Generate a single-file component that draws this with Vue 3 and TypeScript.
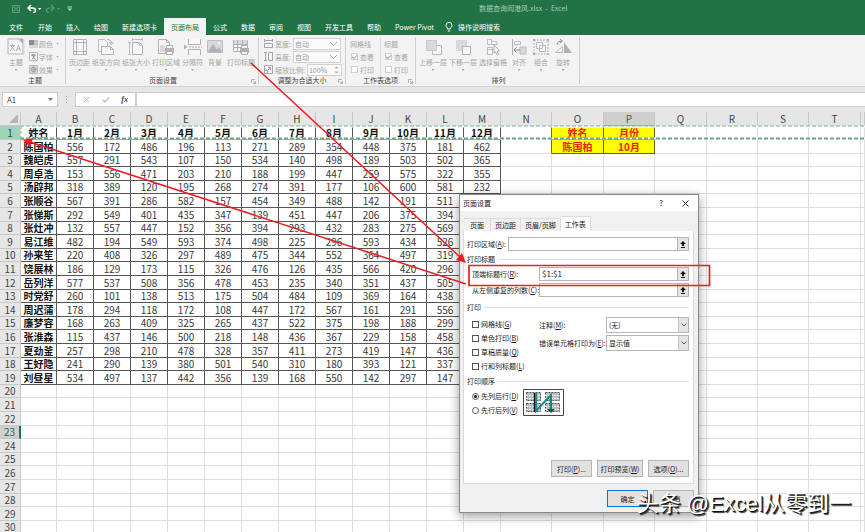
<script setup lang="ts">
import { ref } from 'vue'

interface Shape {
  d: string
  fill?: string
  stroke?: string
  dash?: string
}
interface Tool {
  label: string
  menu: boolean
  shapes: Shape[]
}

const dark = '#b4afb4'
const soft = '#dcd6dd'
const paper = '#f8f6f8'
const printer: Shape[] = [
  { d: 'M8 10h9v5H8z', fill: dark },
  { d: 'M9.500 7.500h6v3h-6z', fill: paper, stroke: dark },
  { d: 'M9.500 13.500h6v3h-6z', fill: paper, stroke: dark },
]

const menus = ['文件', '开始', '插入', '绘图', '新建选项卡', '页面布局', '公式', '数据', '审阅', '视图', '开发工具', '帮助', 'Power Pivot']

const themeTool: Tool = {
  label: '主题',
  menu: true,
  shapes: [
    { d: 'M1 1h15v15H1z', fill: paper, stroke: dark },
    { d: 'M1 16.500h16V1', stroke: soft },
    { d: 'M11 1h5v5z', fill: dark },
    { d: 'M3 7.500h5M5.500 6v1.500M7 8l-4 5M4 8l4 5M9.500 13l2-6 2 6M10 11h3', stroke: dark },
  ],
}

const pageTools: Tool[] = [
  {
    label: '页边距',
    menu: true,
    shapes: [
      { d: 'M2.500 1.500h13v15h-13z', fill: paper, stroke: dark },
      { d: 'M5.500 1v16M12.500 1v16M2 4.500h14M2 13.500h14', stroke: dark },
    ],
  },
  {
    label: '纸张方向',
    menu: true,
    shapes: [
      { d: 'M1.500 1.500h6l3 3v9h-9z', fill: paper, stroke: '#c0bbc0' },
      { d: 'M4.500 8.500h9l3 3v5h-12z', fill: paper, stroke: dark },
      { d: 'M13.500 8.500v3h3', stroke: dark },
      { d: 'M10 1.500c3 0 4.500 1 4.500 4M12.500 4l2 2.500 2-2.500', stroke: dark },
    ],
  },
  {
    label: '纸张大小',
    menu: true,
    shapes: [
      { d: 'M5.500 4.500h7l3 3v9h-10z', fill: paper, stroke: dark },
      { d: 'M12.500 4.500v3h3M5 1.500h11M5.500 0v3M15.500 0v3M2.500 4v13M1 4.500h3M1 16.500h3', stroke: '#c0bbc0' },
    ],
  },
  {
    label: '打印区域',
    menu: true,
    shapes: [
      { d: 'M1.500 1.500h8l3 3v11h-11z', fill: paper, stroke: dark },
      { d: 'M9.500 1.500v3h3', stroke: dark },
      { d: 'M3 7h5v7H3z', fill: soft },
      ...printer,
    ],
  },
  {
    label: '分隔符',
    menu: true,
    shapes: [
      { d: 'M4.500 1v5.500h12V1M4.500 17v-5.500h12V17', fill: paper, stroke: dark },
      { d: 'M5 9h13', stroke: dark, dash: '2 1' },
      { d: 'M0 6.500l3.500 2.500L0 11.500z', fill: dark },
    ],
  },
  {
    label: '背景',
    menu: false,
    shapes: [
      { d: 'M1.500 2.500h15v12h-15z', fill: soft, stroke: '#c0bbc0' },
      { d: 'M2 14l5-8 4 6 2-3 3 5z', fill: dark },
      { d: 'M12 4h2v2h-2z', fill: paper },
    ],
  },
  {
    label: '打印标题',
    menu: false,
    shapes: [
      { d: 'M1.500 2.500h14v11h-14z', fill: paper, stroke: dark },
      { d: 'M2 2h13v4H2z', fill: soft },
      { d: 'M1 6.500h14M1 9.500h14M5.500 2v11M10.500 2v11', stroke: dark },
      ...printer,
    ],
  },
]

const arrangeTools: Tool[] = [
  {
    label: '上移一层',
    menu: true,
    shapes: [
      { d: 'M8.500 7.500h9v9h-9z', fill: paper, stroke: '#c0bbc0' },
      { d: 'M2 2h11v11H2z', fill: soft },
      { d: 'M2.500 2.500h10v10h-10z', stroke: '#cfc8d0' },
    ],
  },
  {
    label: '下移一层',
    menu: true,
    shapes: [
      { d: 'M2 2h11v11H2z', fill: soft },
      { d: 'M8.500 8.500h8v8h-8z', fill: paper, stroke: dark },
    ],
  },
  {
    label: '选择窗格',
    menu: false,
    shapes: [
      { d: 'M3.500 1.500h4v5h-4zM3.500 9.500h5v7h-5zM3 11.500h5M8 6.500h5v-3H8', fill: paper, stroke: '#c0bbc0' },
      { d: 'M10 7l6 6-3 .3 1.500 3-1.500.6-1.300-3L10 15z', fill: paper, stroke: dark },
    ],
  },
  {
    label: '对齐',
    menu: true,
    shapes: [
      { d: 'M2.500 1v16', stroke: dark },
      { d: 'M4.500 3.500h6v3h-6z', fill: paper, stroke: '#c0bbc0' },
      { d: 'M10 9h6v7h-6z', fill: soft, stroke: '#c0bbc0' },
      { d: 'M4 12h6M6.500 9.500L4 12l2.500 2.500', stroke: '#8d888d' },
    ],
  },
  {
    label: '组合',
    menu: true,
    shapes: [
      { d: 'M2 2h14v14H2z', stroke: dark, dash: '2 1' },
      { d: 'M4.500 4.500h6v6h-6zM7.500 7.500h6v6h-6z', fill: paper, stroke: '#bdb8bd' },
      { d: 'M1 1h2v2H1zM15 1h2v2h-2zM1 15h2v2H1zM15 15h2v2h-2z', fill: dark },
    ],
  },
  {
    label: '旋转',
    menu: true,
    shapes: [
      { d: 'M1.500 14.500h7v-6z', fill: paper, stroke: '#bdb8bd' },
      { d: 'M10 4v11h8z', fill: dark },
      { d: 'M3 7c0-3 2-4 5-4M6 1l2.500 2L6 5', stroke: '#8d888d' },
    ],
  },
]

const themeRows: { label: string; shapes: Shape[] }[] = [
  {
    label: '颜色',
    shapes: [
      { d: 'M0 1h5v5H0z', fill: '#8f8a8f' },
      { d: 'M5 1h4v5H5z', fill: '#c8c2c8' },
      { d: 'M0 6h9v3H0z', fill: '#dad4da' },
    ],
  },
  {
    label: '字体',
    shapes: [
      { d: 'M.5.5h8v8h-8z', fill: paper, stroke: '#bdb8bd' },
      { d: 'M2 3h5M4.500 2v1M6 3L3 7.500M3 3l3.500 4.500', stroke: '#8f8a8f' },
    ],
  },
  {
    label: '效果',
    shapes: [
      { d: 'M.5.5h8v8h-8z', fill: soft, stroke: '#bdb8bd' },
      { d: 'M4.500 2a2.500 2.500 0 1 0 .1 0z', fill: '#bbb5bb', stroke: '#a09ba0' },
    ],
  },
]

const cols = ['A', 'B', 'C', 'D', 'E', 'F', 'G', 'H', 'I', 'J', 'K', 'L', 'M', 'N', 'O', 'P', 'Q', 'R', 'S', 'T', '']
const source = `姓名 1月 2月 3月 4月 5月 6月 7月 8月 9月 10月 11月 12月
陈国柏 556 172 486 196 113 271 289 354 448 375 181 462
魏皑虎 557 291 543 107 150 534 140 498 189 503 502 365
周卓浩 153 556 471 203 210 188 199 447 259 575 322 355
汤辟邦 318 389 120 195 268 274 391 177 106 600 581 232
张顺谷 567 391 286 582 157 454 349 488 142 191 511
张悌斯 292 549 401 435 347 139 451 447 206 375 394
张灶冲 132 557 447 152 356 394 293 432 283 275 569
易江维 482 194 549 593 374 498 225 296 593 434 526
孙来笙 220 408 326 297 489 475 344 552 364 497 319
饶展林 186 129 173 115 326 476 126 435 566 420 296
岳列洋 577 537 508 356 478 453 235 340 351 437 505
时党舒 260 101 138 513 175 504 484 109 369 164 438
周迟蒲 178 294 118 172 108 447 172 567 161 291 556
廉梦容 168 263 409 325 265 437 522 375 198 188 299
张淮森 115 437 146 500 218 148 436 367 229 158 458
夏劲釜 257 298 210 478 328 357 411 273 419 147 436
王好隐 241 290 139 380 501 540 310 180 393 121 337
刘昼星 534 497 137 442 356 139 168 550 142 297 147`
const data = source.split('\n').map((line) => line.split(' '))
const lookup = [
  ['姓名', '月份'],
  ['陈国柏', '10月'],
]

function cell(r: number, c: number): string {
  if (c < 13) return data[r - 1]?.[c] ?? ''
  if (c === 14 || c === 15) return lookup[r - 1]?.[c - 14] ?? ''
  return ''
}
function cellClass(r: number, c: number) {
  return {
    filled: r <= 19 && c < 13,
    strong: r === 1 || c === 0,
    query: r <= 2 && (c === 14 || c === 15),
    edge: r <= 2 && c === 13,
  }
}

const colClass = (c: number) => (c === 0 ? 'c-name' : c < 13 ? 'c-num' : c === 20 ? 'c-rest' : c === 14 || c === 16 || c === 19 ? 'c-wide-b' : 'c-wide')

const width = ref('自动')
const height = ref('自动')
const titleRows = ref('$1:$1')
const comments = ref('(无)')
const errors = ref('显示值')
const order = ref('down')
const printOptions = [
  { label: '网格线', key: 'G' },
  { label: '单色打印', key: 'B' },
  { label: '草稿质量', key: 'Q' },
  { label: '行和列标题', key: 'L' },
]
</script>

<template>
  <div class="app">
    <header class="top">
      <div class="titlebar">
        <svg class="quick" width="76" height="18" viewBox="0 0 76 18" fill="none">
          <path d="M12.500 5.500h7v7h-7zM14 5.500v2.500h4V5.500M14 12.500V10h4v2.500" stroke="#5c9a78" />
          <path d="M31 5l-3 3 3 3M28.500 8h4c2 0 3 1 3 2.500 0 1-1 2-2.500 2" stroke="#fff" stroke-width="1.500" />
          <path d="M38 8h3.500L39.700 10z" fill="#fff" />
          <path d="M51 5l3 3-3 3M53.500 8h-4c-2 0-3 1-3 2.500 0 1 1 2 2.500 2" stroke="#5c9a78" stroke-width="1.200" />
          <path d="M57 8h3l-1.500 2z" fill="#5c9a78" />
          <path d="M67.500 7h4.500" stroke="#b9d5c6" />
          <path d="M67.500 8.500h4.500l-2.250 2.500z" fill="#b9d5c6" />
        </svg>
        <span class="doc">数据查询阎港风.xlsx&nbsp; -&nbsp; Excel</span>
      </div>
      <nav class="tabs">
        <button v-for="m in menus" :key="m" type="button" :class="['tab', { active: m === '页面布局' }]">{{ m }}</button>
        <svg class="bulb" width="8" height="10" viewBox="0 0 8 10" fill="none" stroke="#fff">
          <path d="M2.700 7C2.700 5.500 1 5 1 3.300a3 3 0 0 1 6 0C7 5 5.300 5.500 5.300 7zM2.800 9h2.400" />
        </svg>
        <button type="button" class="tell">操作说明搜索</button>
      </nav>
    </header>

    <section class="ribbon">
      <div class="group g-theme">
        <div class="tools">
          <button type="button" class="big" disabled>
            <svg width="18" height="18" viewBox="0 0 18 18">
              <path v-for="(s, i) in themeTool.shapes" :key="i" :d="s.d" :fill="s.fill ?? 'none'" :stroke="s.stroke ?? 'none'" />
            </svg>
            <span>{{ themeTool.label }}</span>
            <i class="caret"></i>
          </button>
          <div class="stack">
            <button v-for="t in themeRows" :key="t.label" type="button" class="small" disabled>
              <svg width="9" height="9" viewBox="0 0 9 9">
                <path v-for="(s, i) in t.shapes" :key="i" :d="s.d" :fill="s.fill ?? 'none'" :stroke="s.stroke ?? 'none'" />
              </svg>
              {{ t.label }}<i class="caret"></i>
            </button>
          </div>
        </div>
        <div class="caption">主题</div>
      </div>

      <div class="group g-page">
        <div class="tools">
          <button v-for="t in pageTools" :key="t.label" type="button" class="big" disabled>
            <svg width="18" height="18" viewBox="0 0 18 18">
              <path v-for="(s, i) in t.shapes" :key="i" :d="s.d" :fill="s.fill ?? 'none'" :stroke="s.stroke ?? 'none'" :stroke-dasharray="s.dash" />
            </svg>
            <span>{{ t.label }}</span>
            <i v-if="t.menu" class="caret"></i>
          </button>
        </div>
        <div class="caption">页面设置</div>
        <svg class="launch" width="5" height="5" viewBox="0 0 5 5" fill="none" stroke="#b0b0b0"><path d="M.5 4V.5H4M2 2l2.500 2.500M4.500 2v2.500H2" /></svg>
      </div>

      <div class="group g-fit">
        <div class="fit-rows">
          <div class="fit">
            <svg width="9" height="9" viewBox="0 0 9 9" fill="none" stroke="#a9a4a9"><path d="M.5 0v3M8.500 0v3M0 1.500h9M.5 4.500h8v4h-8z" /></svg>
            <label for="fitw">宽度:</label>
            <span class="pick">
              <select id="fitw" v-model="width" disabled><option>自动</option></select>
              <svg width="9" height="6" viewBox="0 0 9 6" fill="none" stroke="#aaa"><path d="M1 1l3.500 3.500L8 1" /></svg>
            </span>
          </div>
          <div class="fit">
            <svg width="9" height="9" viewBox="0 0 9 9" fill="none" stroke="#a9a4a9"><path d="M0 .5h3M0 8.500h3M1.500 0v9M4.500.5h4v8h-4z" /></svg>
            <label for="fith">高度:</label>
            <span class="pick">
              <select id="fith" v-model="height" disabled><option>自动</option></select>
              <svg width="9" height="6" viewBox="0 0 9 6" fill="none" stroke="#aaa"><path d="M1 1l3.500 3.500L8 1" /></svg>
            </span>
          </div>
          <div class="fit">
            <svg width="9" height="9" viewBox="0 0 9 9" fill="none" stroke="#a9a4a9"><path d="M.5.5h8v8h-8zM.5 5.500h3v3M4 2.500h2.500V5M6.500 2.500L4 5" /></svg>
            <label for="scale">缩放比例:</label>
            <span class="pick">
              <input id="scale" value="100%" disabled />
              <svg width="5" height="9" viewBox="0 0 5 9" fill="#aaa"><path d="M.5 3L2.500 1l2 2zM.5 6l2 2 2-2z" /></svg>
            </span>
          </div>
        </div>
        <div class="caption">调整为合适大小</div>
        <svg class="launch" width="5" height="5" viewBox="0 0 5 5" fill="none" stroke="#b0b0b0"><path d="M.5 4V.5H4M2 2l2.500 2.500M4.500 2v2.500H2" /></svg>
      </div>

      <div class="group g-opts">
        <div class="opts">
          <div v-for="g in ['网格线', '标题']" :key="g" class="opt">
            <span>{{ g }}</span>
            <label><input type="checkbox" checked disabled />查看</label>
            <label><input type="checkbox" disabled />打印</label>
          </div>
        </div>
        <div class="caption">工作表选项</div>
        <svg class="launch" width="5" height="5" viewBox="0 0 5 5" fill="none" stroke="#b0b0b0"><path d="M.5 4V.5H4M2 2l2.500 2.500M4.500 2v2.500H2" /></svg>
      </div>

      <div class="group g-arr">
        <div class="tools">
          <button v-for="t in arrangeTools" :key="t.label" type="button" class="big" disabled>
            <svg width="18" height="18" viewBox="0 0 18 18">
              <path v-for="(s, i) in t.shapes" :key="i" :d="s.d" :fill="s.fill ?? 'none'" :stroke="s.stroke ?? 'none'" :stroke-dasharray="s.dash" />
            </svg>
            <span>{{ t.label }}</span>
            <i v-if="t.menu" class="caret"></i>
          </button>
        </div>
        <div class="caption">排列</div>
      </div>
    </section>

    <section class="formula">
      <div class="namebox"><input value="A1" aria-label="名称框" /><i class="caret"></i></div>
      <svg class="grip" width="3" height="9" viewBox="0 0 3 9" fill="#aaa"><path d="M1 1h1v1H1zM1 4h1v1H1zM1 7h1v1H1z" /></svg>
      <div class="fx">
        <svg width="7" height="7" viewBox="0 0 7 7" fill="none" stroke="#b5b5b5"><path d="M1 1l5 5M6 1L1 6" /></svg>
        <svg width="8" height="7" viewBox="0 0 8 7" fill="none" stroke="#b5b5b5" stroke-width="1.200"><path d="M1 4l2 2 4-5" /></svg>
        <em>fx</em>
      </div>
      <input class="bar" aria-label="编辑栏" />
    </section>

    <main class="sheet">
      <table class="grid">
        <colgroup>
          <col class="c-head" />
          <col v-for="(c, i) in cols" :key="i" :class="colClass(i)" />
        </colgroup>
        <thead>
          <tr>
            <th class="corner"><svg width="9" height="9" viewBox="0 0 9 9"><path d="M9 0v9H0z" fill="#b4b4b4" /></svg></th>
            <th v-for="(c, i) in cols" :key="i" :class="{ current: c === 'P' }">{{ c }}</th>
          </tr>
        </thead>
        <tbody>
          <tr v-for="r in 30" :key="r">
            <th :class="{ picked: r === 1, current: r === 23 }">{{ r }}</th>
            <td v-for="(c, i) in cols" :key="i" :class="cellClass(r, i)">{{ cell(r, i) }}</td>
          </tr>
        </tbody>
      </table>
      <svg class="ants" height="15" fill="none">
        <path d="M0 1.500h2400M0 13.500h2400M1.500 1v13" stroke="#fff" stroke-width="2" />
        <path d="M0 1h2400" stroke="#7fb296" stroke-dasharray="4 2" />
        <path d="M0 13.500h2400" stroke="#6fa588" stroke-width="2" stroke-dasharray="4 2" />
        <path d="M1 1v13" stroke="#7fb296" stroke-dasharray="3 2" />
      </svg>
    </main>

    <section class="dialog" role="dialog" aria-label="页面设置">
      <div class="dlg-title">
        <span>页面设置</span>
        <button type="button" class="help">?</button>
        <button type="button" aria-label="关闭">
          <svg width="7" height="7" viewBox="0 0 7 7" fill="none" stroke="#222"><path d="M.5.5l6 6M6.500.5l-6 6" /></svg>
        </button>
      </div>
      <div class="dlg-tabs">
        <button type="button">页面</button>
        <button type="button">页边距</button>
        <button type="button">页眉/页脚</button>
        <button type="button" class="on">工作表</button>
      </div>
      <div class="panel">
        <div class="field">
          <label for="area">打印区域(<u>A</u>):</label>
          <span class="refbox long"><input id="area" /><button type="button" aria-label="选择区域"><svg width="6" height="7" viewBox="0 0 6 7"><path d="M3 0l3 3H4v2H2V3H0zM1 6h4v1H1z" fill="#111" /></svg></button></span>
        </div>
        <div class="section">打印标题</div>
        <div class="field inset">
          <label for="rows">顶端标题行(<u>R</u>):</label>
          <span class="refbox"><input id="rows" v-model="titleRows" /><button type="button" aria-label="选择行"><svg width="6" height="7" viewBox="0 0 6 7"><path d="M3 0l3 3H4v2H2V3H0zM1 6h4v1H1z" fill="#111" /></svg></button></span>
        </div>
        <div class="field inset">
          <label for="colsr">从左侧重复的列数(<u>C</u>):</label>
          <span class="refbox"><input id="colsr" /><button type="button" aria-label="选择列"><svg width="6" height="7" viewBox="0 0 6 7"><path d="M3 0l3 3H4v2H2V3H0zM1 6h4v1H1z" fill="#111" /></svg></button></span>
        </div>
        <div class="section">打印</div>
        <div class="print">
          <div class="checks">
            <label v-for="o in printOptions" :key="o.key"><input type="checkbox" />{{ o.label }}(<u>{{ o.key }}</u>)</label>
          </div>
          <div class="selects">
            <div>
              <label for="cm">注释(<u>M</u>):</label>
              <span class="combo"><select id="cm" v-model="comments"><option>(无)</option></select><i><svg width="6" height="4" viewBox="0 0 6 4" fill="none" stroke="#555"><path d="M.5.5L3 3 5.500.5" /></svg></i></span>
            </div>
            <div>
              <label for="er">错误单元格打印为(<u>E</u>):</label>
              <span class="combo"><select id="er" v-model="errors"><option>显示值</option></select><i><svg width="6" height="4" viewBox="0 0 6 4" fill="none" stroke="#555"><path d="M.5.5L3 3 5.500.5" /></svg></i></span>
            </div>
          </div>
        </div>
        <div class="section">打印顺序</div>
        <div class="order">
          <div class="checks">
            <label><input v-model="order" type="radio" name="order" value="down" />先列后行(<u>D</u>)</label>
            <label><input v-model="order" type="radio" name="order" value="over" />先行后列(<u>V</u>)</label>
          </div>
          <svg width="41" height="27" viewBox="0 0 41 27">
            <path d="M.5.5h40v26H.5z" fill="#fff" stroke="#444" />
            <g fill="#bdbdbd" stroke="#555" stroke-dasharray="2 1">
              <path d="M3.500 3.500h14v8h-14zM22.500 3.500h14v8h-14zM3.500 14.500h14v8h-14zM22.500 14.500h14v8h-14z" />
              <path d="M3 6.500h15M3 9.500h15M22 6.500h15M22 9.500h15M3 17.500h15M3 20.500h15M22 17.500h15M22 20.500h15" stroke="#eee" />
            </g>
            <path d="M11.500 4v19M27.500 6v15" stroke="#111" stroke-width="1.500" />
            <path d="M13 4v18L28 6v15" fill="none" stroke="#128a8a" stroke-width="2" />
            <path d="M24 20h8l-4 4z" fill="#0c5050" />
          </svg>
        </div>
        <div class="actions">
          <button type="button">打印(<u>P</u>)...</button>
          <button type="button" class="wide">打印预览(<u>W</u>)</button>
          <button type="button">选项(<u>O</u>)...</button>
        </div>
      </div>
      <div class="dlg-foot">
        <button type="button" class="ok">确定</button>
        <button type="button">取消</button>
      </div>
    </section>

    <svg class="marks" fill="none">
      <path d="M251 63L460 257" stroke="#ee1c25" stroke-width="1.500" />
      <path d="M466 263l-10-3 6-7z" fill="#ee1c25" />
      <path d="M466 284L30 142" stroke="#ee1c25" stroke-width="1.500" />
      <path d="M23 140l10-2-3 9z" fill="#ee1c25" />
      <path d="M469 265.500h240.500v20H469z" stroke="#ee1c25" stroke-width="1.700" />
    </svg>
    <div class="watermark">头条 @Excel从零到一</div>
  </div>
</template>

<style>
body {
  overflow: hidden;
}
</style>

<style scoped>
.app {
  position: relative;
  display: flex;
  flex-direction: column;
  height: 100vh;
  overflow: hidden;
  background: #e6e6e6;
  color: #262626;
  font: 7px/10px 'Noto Sans CJK SC', sans-serif;
}
.app * {
  box-sizing: border-box;
}
svg {
  display: block;
  flex: none;
}
button,
input,
select {
  margin: 0;
  padding: 0;
  border: 0;
  background: none;
  color: inherit;
  font: inherit;
  white-space: nowrap;
  outline: none;
  min-width: 0;
}
label,
span {
  white-space: nowrap;
}
.caret {
  width: 3px;
  height: 2px;
  background: #a8a8a8;
  clip-path: polygon(0 0, 100% 0, 50% 100%);
}

.top {
  background: #217346;
  color: #fff;
}
.titlebar {
  display: flex;
  height: 18px;
}
.doc {
  flex: 1;
  padding: 3px 0 0 403px;
  color: #a9c9b7;
}
.tabs {
  display: flex;
  align-items: stretch;
  height: 17px;
  padding-left: 2px;
}
.tab {
  padding: 0 7px;
}
.tab:first-child {
  margin-right: 1px;
}
.tab.active {
  background: #f3f3f3;
  color: #217346;
}
.bulb {
  align-self: center;
  margin: 0 5px 0 4px;
}

.ribbon {
  display: flex;
  height: 52px;
  background: #f3f3f3;
  border-bottom: 1px solid #d2d2d2;
  color: #a5a5a5;
}
.group {
  position: relative;
  display: flex;
  flex-direction: column;
  justify-content: space-between;
  margin: 2px 0;
  border-right: 1px solid #d0d0d0;
}
.g-theme {
  width: 66px;
  padding-left: 5px;
}
.g-page {
  width: 193px;
  padding-left: 2px;
}
.g-fit {
  width: 87px;
}
.g-opts {
  width: 70px;
}
.g-arr {
  width: 164px;
  padding-left: 2px;
}
.tools {
  display: flex;
}
.big {
  display: flex;
  flex-direction: column;
  align-items: center;
  gap: 1px;
  min-width: 22px;
  padding: 1px 1px 0;
}
.big .caret {
  margin-top: 1px;
}
.stack {
  display: flex;
  flex-direction: column;
  gap: 2px;
  padding: 1px 0 0 2px;
}
.small {
  display: flex;
  align-items: center;
  gap: 1px;
  height: 11px;
}
.small .caret {
  margin-left: 2px;
}
.caption {
  color: #444;
  text-align: center;
  line-height: 8px;
}
.launch {
  position: absolute;
  right: 2px;
  bottom: 0;
}
.fit-rows {
  display: flex;
  flex-direction: column;
  padding: 0 5px;
}
.fit {
  display: flex;
  align-items: center;
  gap: 2px;
  height: 13px;
}
.pick {
  position: relative;
  display: flex;
  flex: 0 0 48px;
  height: 12px;
  margin-left: auto;
  border: 1px solid #d2d2d2;
  background: #fafafa;
}
.fit:last-child .pick {
  flex-basis: 35px;
}
.pick select,
.pick input {
  flex: 1;
  width: 100%;
  padding-left: 1px;
  appearance: none;
  opacity: 1;
  color: #999;
}
.pick svg {
  position: absolute;
  right: 2px;
  top: 50%;
  transform: translateY(-50%);
}
.opts {
  display: flex;
}
.opt {
  display: flex;
  flex-direction: column;
  width: 34px;
  padding-left: 4px;
}
.opt + .opt {
  padding-left: 3px;
  border-left: 1px solid #dcdcdc;
}
.opt label,
.opt span {
  display: flex;
  align-items: center;
  gap: 2px;
  height: 13px;
}
input[type='checkbox'] {
  display: grid;
  place-items: center;
  width: 7px;
  height: 7px;
  border: 1px solid #555;
  background: #fff;
  appearance: none;
}
.opt input[type='checkbox'] {
  margin-left: 1px;
  border-color: #d0d0d0;
}
.opt input:checked::after {
  content: '';
  width: 4px;
  height: 2px;
  border: solid #aaa;
  border-width: 0 0 1px 1px;
  transform: rotate(-45deg);
}

.formula {
  display: flex;
  align-items: stretch;
  height: 25px;
  padding: 5px 0 5px 2px;
}
.namebox {
  display: flex;
  align-items: center;
  width: 56px;
  padding: 0 4px;
  border: 1px solid #cfcfcf;
  background: #fff;
}
.namebox input {
  flex: 1;
  color: #444;
  font-size: 8px;
}
.namebox .caret {
  width: 5px;
  height: 3px;
  background: #777;
}
.grip {
  align-self: center;
  margin: 0 7px;
}
.fx {
  display: flex;
  align-items: center;
  justify-content: space-between;
  width: 61px;
  padding: 0 7px;
  border: 1px solid #cfcfcf;
  background: #fff;
}
.fx em {
  font: italic bold 8px 'Liberation Serif', serif;
  color: #444;
}
.bar {
  flex: 1;
  border: 1px solid #cfcfcf;
  border-right: 0;
  background: #fff;
}

.sheet {
  position: relative;
  flex: 1;
  min-height: 0;
  overflow: hidden;
  background: #fff;
}
.grid {
  width: 100%;
  table-layout: fixed;
  border-collapse: separate;
  border-spacing: 0;
  color: #3a3a3a;
  font-size: 10px;
  line-height: 12px;
  text-align: center;
}
.c-head {
  width: 21px;
}
.c-name {
  width: 36px;
}
.c-num {
  width: 37px;
}
.c-wide {
  width: 51px;
}
.c-wide-b {
  width: 52px;
}
.grid tr {
  height: 14px;
}
.grid tbody tr:nth-child(5n + 3),
.grid tbody tr:nth-child(5n) {
  height: 13px;
}
.grid th,
.grid td {
  padding: 0;
  border: solid #dedede;
  border-width: 0 1px 1px 0;
  white-space: nowrap;
}
.grid th {
  background: #e6e6e6;
  border-color: #c8c8c8;
  color: #444;
  font-weight: 400;
}
.corner svg {
  margin: 0 2px 0 auto;
}
.grid th.current {
  background: #cfcfcf;
  color: #217346;
}
thead th.current {
  border-bottom-color: #217346 !important;
}
tbody th.current {
  border-right: 2px solid #217346 !important;
}
.grid th.picked {
  background: #9fd5b7;
  color: #1d5a39;
}
.grid .filled {
  border-color: #555;
}
.grid .strong {
  color: #111;
  font-weight: 700;
}
.grid .edge {
  border-right-color: #666;
}
.grid .query {
  background: #ff0;
  border-color: #666600;
  color: #f21b0c;
  font-weight: 700;
}
.ants {
  position: absolute;
  left: 20px;
  top: 13px;
  width: calc(100% - 20px);
}

.dialog {
  position: absolute;
  left: 459px;
  top: 194px;
  width: 240px;
  border: 1px solid #8a8a8a;
  background: #f0f0f0;
  box-shadow: 0 3px 10px rgba(0, 0, 0, 0.4);
  color: #1a1a1a;
}
.dlg-title {
  display: flex;
  align-items: center;
  height: 16px;
  padding: 0 9px 0 3px;
  background: #fff;
}
.dlg-title span {
  flex: 1;
}
.help {
  margin-right: 19px;
  font-size: 8px;
}
.dlg-tabs {
  display: flex;
  align-items: flex-end;
  height: 20px;
  padding: 0 4px;
}
.dlg-tabs button {
  height: 13px;
  padding: 0 4px;
  border: 1px solid #dcdcdc;
  border-width: 1px 1px 0 0;
}
.dlg-tabs button:first-child {
  padding: 0 6px;
}
.dlg-tabs .on {
  height: 15px;
  background: #fff;
}
.panel {
  margin: 0 4px 0 3px;
  padding: 6px 4px 6px 3px;
  border: 1px solid #dcdcdc;
  border-top: 0;
  background: #fff;
}
.field {
  display: flex;
  align-items: center;
  justify-content: space-between;
  height: 14px;
}
.field + .inset {
  margin-top: 2px;
}
.inset {
  padding-left: 5px;
}
.refbox {
  display: flex;
  width: 150px;
  height: 14px;
  border: 1px solid #b5b5b5;
}
.refbox.long {
  width: 181px;
}
.refbox input {
  flex: 1;
  padding-left: 2px;
  font-size: 8px;
}
.refbox button {
  display: grid;
  place-items: center;
  width: 11px;
  border-left: 1px solid #b5b5b5;
  background: #e4e4e4;
}
.section {
  display: flex;
  align-items: center;
  gap: 3px;
  height: 16px;
}
.section::after {
  content: '';
  flex: 1;
  border-top: 1px solid #e0e0e0;
}
.section + .print,
.section + .order {
  padding-left: 5px;
}
.inset + .section {
  height: 20px;
}
.print {
  display: flex;
  justify-content: space-between;
  align-items: flex-start;
}
.checks {
  display: flex;
  flex-direction: column;
}
.checks label {
  display: flex;
  align-items: center;
  height: 14px;
}
.checks input {
  margin-right: 2px;
}
.checks input[type='radio'] {
  display: grid;
  place-items: center;
  width: 7px;
  height: 7px;
  border: 1px solid #555;
  border-radius: 50%;
  appearance: none;
}
.checks input[type='radio']:checked::after {
  content: '';
  width: 3px;
  height: 3px;
  border-radius: 50%;
  background: #111;
}
.selects {
  display: flex;
  flex-direction: column;
  gap: 2px;
  width: 150px;
}
.selects > div {
  display: flex;
  align-items: center;
  justify-content: space-between;
}
.combo {
  display: flex;
  flex: 0 0 83px;
  height: 16px;
  border: 1px solid #b5b5b5;
}
.combo select {
  flex: 1;
  padding-left: 2px;
  appearance: none;
}
.combo i {
  display: grid;
  place-items: center;
  width: 10px;
  border-left: 1px solid #c5c5c5;
  background: #e4e4e4;
}
.order {
  display: flex;
  gap: 4px;
}
.actions {
  display: flex;
  justify-content: flex-end;
  gap: 5px;
  margin-top: 43px;
}
.actions button,
.dlg-foot button {
  width: 41px;
  height: 17px;
  border: 1px solid #b5b5b5;
  background: #e1e1e1;
}
.actions .wide {
  width: 46px;
}
.dlg-foot {
  display: flex;
  justify-content: flex-end;
  gap: 5px;
  padding: 6px 4px 5px;
}
.dlg-foot .ok {
  border: 1px solid #0078d7;
}

.marks {
  position: absolute;
  inset: 0;
  width: 100%;
  height: 100%;
  pointer-events: none;
}
.watermark {
  position: absolute;
  right: 14px;
  bottom: 14px;
  color: #fff;
  font-family: 'Liberation Sans', 'Noto Sans CJK SC', sans-serif;
  font-size: 22px;
  line-height: 28px;
  text-shadow: 1px 1px 0 #111, 2px 2px 1px #333;
  white-space: nowrap;
}
</style>
